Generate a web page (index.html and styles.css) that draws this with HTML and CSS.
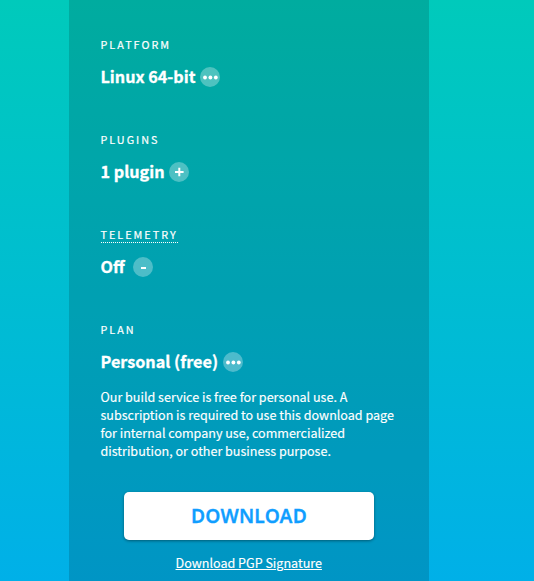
FILE: index.html
```html
<!DOCTYPE html>
<html lang="en">
<head>
<meta charset="utf-8">
<title>Download</title>
<link rel="stylesheet" href="styles.css">
</head>
<body>
<main class="panel">
  <section class="option">
    <h2 class="label"><span>PLATFORM</span></h2>
    <div class="value"><span>Linux 64-bit</span><button class="toggle" aria-label="Change platform"><svg viewBox="0 0 20 20"><circle cx="5" cy="10.500" r="1.900"/><circle cx="10.400" cy="10.500" r="1.900"/><circle cx="15.800" cy="10.500" r="1.900"/></svg></button></div>
  </section>
  <section class="option">
    <h2 class="label"><span>PLUGINS</span></h2>
    <div class="value"><span>1 plugin</span><button class="toggle" aria-label="Add plugin"><svg viewBox="0 0 20 20"><path d="M6 9h3.300V5.700h2V9h3.300v2h-3.300v3.300h-2V11H6z"/></svg></button></div>
  </section>
  <section class="option">
    <h2 class="label"><span class="hint">TELEMETRY</span></h2>
    <div class="value"><span>Off</span><button class="toggle spaced" aria-label="Telemetry"><svg viewBox="0 0 20 20"><path d="M8 10h5v2H8z"/></svg></button></div>
  </section>
  <section class="option plan-option">
    <h2 class="label"><span>PLAN</span></h2>
    <div class="value"><span>Personal (free)</span><button class="toggle" aria-label="Change plan"><svg viewBox="0 0 20 20"><circle cx="5" cy="10.500" r="1.900"/><circle cx="10.400" cy="10.500" r="1.900"/><circle cx="15.800" cy="10.500" r="1.900"/></svg></button></div>
    <p class="note">Our build service is free for personal use. A<br>subscription is required to use this download page<br>for internal company use, commercialized<br>distribution, or other business purpose.</p>
  </section>
  <button class="download">DOWNLOAD</button>
  <a class="signature" href="#">Download PGP Signature</a>
</main>
</body>
</html>
```
FILE: styles.css
```css
* { box-sizing: border-box; }

html { height: 100%; }

body {
  margin: 0;
  height: 100%;
  overflow: hidden;
  display: flex;
  background: linear-gradient(#00cabb, #00b0e8);
  color: #fff;
  font-family: "Noto Sans CJK SC", "Noto Sans", sans-serif;
}

.panel {
  width: 360px;
  height: 581px;
  margin-left: 69px;
  padding: 35px 32px 0 31.5px;
  display: flex;
  flex-direction: column;
  background: rgba(0, 0, 0, .15);
}

.option { height: 95px; flex: none; }

.plan-option { height: 172px; }

.label {
  margin: -1px 0 0;
  height: 21px;
  display: flex;
  font-size: 10.8px;
  line-height: 20px;
  font-weight: 400;
  letter-spacing: 2px;
  -webkit-text-stroke: .2px #fff;
}

.hint {
  height: 19px;
  width: 77px;
  border-bottom: 1px dotted #fff;
}

.value {
  height: 20px;
  margin-top: 12px;
  display: flex;
  align-items: center;
  gap: 4.4px;
  font-size: 16.2px;
  line-height: 20px;
  font-weight: 700;
  white-space: nowrap;
  -webkit-text-stroke: .3px #fff;
}

.value span { padding-bottom: 2px; }

.toggle {
  width: 20px;
  height: 20px;
  flex: none;
  padding: 0;
  border: 0;
  border-radius: 50%;
  background: rgba(255, 255, 255, .3);
}

.toggle svg { display: block; width: 20px; height: 20px; fill: #fff; }

.spaced { margin-left: 3.5px; }

.plan-option .toggle { margin-left: .6px; }

.note {
  margin: 16px 0 0;
  font-size: 12.55px;
  line-height: 18px;
  white-space: nowrap;
  -webkit-text-stroke: .15px #fff;
}

.download {
  width: 250px;
  height: 48px;
  flex: none;
  margin-left: 23.5px;
  padding: 0 0 1px;
  border: 0;
  border-radius: 5px;
  background: #fff;
  box-shadow: 0 1px 3px rgba(0, 0, 0, .4);
  color: #109eff;
  font: 600 19.2px/47px "Noto Sans", sans-serif;
  letter-spacing: .2px;
  -webkit-text-stroke: .3px #109eff;
}

.signature {
  align-self: center;
  margin-top: 13px;
  color: #fff;
  font-size: 12.55px;
  line-height: 20px;
  -webkit-text-stroke: .15px #fff;
}
```
